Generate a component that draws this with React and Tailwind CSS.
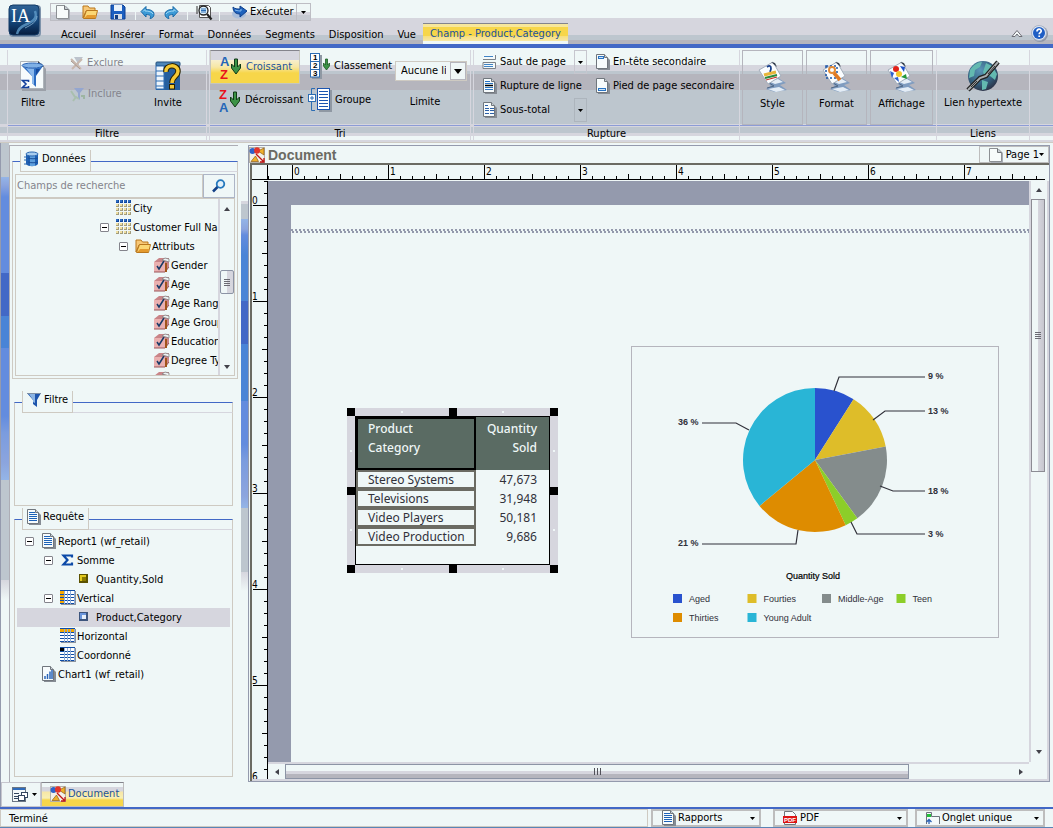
import React, { useState } from 'react';

/* ---------- icons ---------- */

const LogoIcon = () => (
  <svg width="34" height="34" viewBox="0 0 34 34" aria-hidden="true">
    <defs>
      <linearGradient id="logoBg" x1="0" y1="0" x2="0" y2="1">
        <stop offset="0" stopColor="#2f6295" />
        <stop offset="0.5" stopColor="#164a80" />
        <stop offset="1" stopColor="#061c3d" />
      </linearGradient>
    </defs>
    <rect x="1" y="1" width="32" height="32" rx="4" fill="#7e93ab" />
    <rect x="1" y="1" width="30" height="30" rx="4" fill="url(#logoBg)" stroke="#123a66" />
    <path d="M27 7c3 8-3 11-10 14-5 2-7 5-8 9" fill="none" stroke="#5f9bc9" strokeWidth="2.5" opacity="0.8" />
    <path d="M29 12c0 6-6 9-12 12" fill="none" stroke="#9cc7e6" strokeWidth="1" opacity="0.7" />
    <text x="3" y="18" fontFamily="Liberation Serif, serif" fontSize="18" fill="#fff">IA</text>
  </svg>
);

const NewIcon = () => (
  <svg width="16" height="16" viewBox="0 0 16 16" aria-hidden="true">
    <path d="M3 2h8l4 4v10H3z" fill="#a9adb5" />
    <path d="M1.500 1.500h8l4 4v9h-12z" fill="#f7fbfb" stroke="#8c9094" />
    <path d="M9.500 1.500v4h4" fill="#c6ccd2" stroke="#6f7377" />
  </svg>
);

const FolderIcon = () => (
  <svg width="16" height="16" viewBox="0 0 16 16" aria-hidden="true">
    <path d="M1 2h5l1.500 2H13v3H4L1 14z" fill="#f7c877" stroke="#b9771d" />
    <path d="M4.500 6.500h11l-2 8h-12z" fill="#fbd774" stroke="#b9771d" />
    <path d="M5 11h9l-1 3H2.500z" fill="#e49a2e" />
  </svg>
);

const SaveIcon = () => (
  <svg width="16" height="16" viewBox="0 0 16 16" aria-hidden="true">
    <path d="M1 1h12l2 2v12H1z" fill="#1c5fc0" stroke="#0d3f94" />
    <rect x="4" y="1" width="8" height="6" fill="#eaf3fb" />
    <rect x="4" y="10" width="8" height="5" fill="#d5dde6" />
    <rect x="5" y="11" width="3" height="4" fill="#123d83" />
  </svg>
);

const UndoIcon = ({ flip }) => (
  <svg width="15" height="15" viewBox="0 0 15 15" className={flip ? '-scale-x-100' : ''} aria-hidden="true">
    <path d="M1 6.500l5-5v3c4 0 8 1 8 5 0 2-2 4-4 4 1-2 1-4-4-4v2.500z" fill="#3b9ad6" stroke="#1a6aa8" />
    <path d="M3 6.500l2-2V6c4 0 7 1 8 3" fill="none" stroke="#9fd8f5" />
  </svg>
);

const PreviewIcon = () => (
  <svg width="18" height="17" viewBox="0 0 18 17" aria-hidden="true">
    <path d="M4.500 1.500h9l2 2v10h-11z" fill="#fff" stroke="#555" />
    <path d="M1 3h2M1 5h2M1 7h2M1 9h2" stroke="#333" />
    <circle cx="8.500" cy="6.500" r="4.500" fill="#dff1fb" stroke="#222" strokeWidth="1.300" />
    <path d="M6 5h5M6 6.500h5M6 8h5" stroke="#2b6fb8" />
    <path d="M12 10l4.500 5.500" stroke="#222" strokeWidth="2.200" />
  </svg>
);

const RunIcon = () => (
  <svg width="16" height="14" viewBox="0 0 16 14" aria-hidden="true">
    <ellipse cx="7" cy="9" rx="7" ry="4.500" fill="#a8bedc" />
    <path d="M1 2c2 2 4 2 7 2V1l7 5-7 6V9C4 9 1 7 1 2z" fill="#1d62bd" stroke="#0e3f8c" />
    <path d="M3 5c3 1 5 1 6 1V4" fill="none" stroke="#86bdf0" />
  </svg>
);

const HelpIcon = () => (
  <svg width="17" height="17" viewBox="0 0 17 17" aria-hidden="true">
    <circle cx="9" cy="9" r="8" fill="#8f96a5" />
    <circle cx="8" cy="8" r="7.500" fill="#dce6f4" stroke="#aab3c4" />
    <circle cx="8" cy="8" r="6" fill="#1f5ec4" />
    <path d="M6 6.500c0-3 4.200-3 4.200-.5 0 1.600-2 1.600-2 3.200M8.200 10.500v1.600" fill="none" stroke="#fff" strokeWidth="1.700" />
  </svg>
);

const ChevronsIcon = () => (
  <svg width="12" height="9" viewBox="0 0 12 9" aria-hidden="true">
    <path d="M1 7.500l5-6 5 6H8L6 5 4 7.500z" fill="#f6fafa" stroke="#6d6d75" />
  </svg>
);

const SigmaFilterIcon = () => (
  <svg width="28" height="32" viewBox="0 0 28 32" aria-hidden="true">
    <path d="M3 3h19l5 6v22H3z" fill="#9ba0a8" />
    <path d="M1.500 1.500h18l5 5v22h-23z" fill="#f6fbfc" stroke="#aeb4ba" />
    <path d="M19 1v6h6z" fill="#3f434a" />
    <path d="M3 6c3 3 18 3 21 0l-7 10v11l-4-4v-7z" fill="#2b6cc2" />
    <path d="M7 8l6 8v7l2 2V9z" fill="#8ab8ec" />
    <path d="M17 9h4l-4 6z" fill="#164a9c" />
    <ellipse cx="13.500" cy="5.500" rx="10.500" ry="2.500" fill="#7fb0e6" stroke="#2f66b5" />
    <path d="M9.500 22V20.500h-6l3.500 3.500-3.500 3.500h6V26" fill="none" stroke="#123f9c" strokeWidth="1.600" />
  </svg>
);

const ExcludeIcon = () => (
  <svg width="14" height="14" viewBox="0 0 14 14" aria-hidden="true">
    <path d="M4 1h9L9 6v6L7 10V6z" fill="#bcc3cc" />
    <path d="M1 3l10 10M12 3L2 13" stroke="#c8b8ae" strokeWidth="2" />
    <path d="M1 5l9 8" stroke="#a9988f" />
  </svg>
);

const IncludeIcon = () => (
  <svg width="15" height="15" viewBox="0 0 15 15" aria-hidden="true">
    <path d="M4 1h10l-4 5v7l-2-2V6z" fill="#94a6d0" />
    <path d="M1 4l4 6M3 14l3-4 3 2" fill="none" stroke="#a9bfae" strokeWidth="2" />
    <path d="M11 9h3v3" fill="none" stroke="#9db5a2" strokeWidth="2" />
  </svg>
);

const PromptIcon = () => (
  <svg width="26" height="30" viewBox="0 0 26 30" aria-hidden="true">
    <rect x="1" y="2" width="24" height="27" fill="#255f9e" />
    <rect x="1" y="1" width="24" height="4" rx="1" fill="#4e86b8" stroke="#234f7d" />
    <rect x="1" y="5" width="8" height="23" fill="#eef5fb" stroke="#2c6db3" />
    <path d="M1 10h9M1 15h9M1 20h9M1 25h9" stroke="#2c6db3" />
    <path d="M11 11c-1-8 12-8 12-1 0 6-6 5-6 12" fill="none" stroke="#2b2200" strokeWidth="5.500" />
    <path d="M11 11c-1-8 12-8 12-1 0 6-6 5-6 12" fill="none" stroke="#f4c934" strokeWidth="3.500" />
    <rect x="14.500" y="23.500" width="5" height="4.500" fill="#f4c934" stroke="#2b2200" />
  </svg>
);

const SortIcon = ({ down }) => (
  <svg width="24" height="26" viewBox="0 0 24 26" aria-hidden="true">
    <text x="1" y="12" fontFamily="Liberation Sans, sans-serif" fontWeight="bold" fontSize="13" fill={down ? '#e8121b' : '#2666b8'}>
      {down ? 'Z' : 'A'}
    </text>
    <text x="1" y="25" fontFamily="Liberation Sans, sans-serif" fontWeight="bold" fontSize="13" fill={down ? '#2666b8' : '#e8121b'}>
      {down ? 'A' : 'Z'}
    </text>
    <path d="M15.500 5h3v8l3-3v4l-4.500 6-4.500-6v-4l3 3z" fill="#3c9346" stroke="#123b17" />
  </svg>
);

const RankIcon = () => (
  <svg width="21" height="26" viewBox="0 0 21 26" aria-hidden="true">
    <rect x="2" y="2" width="10" height="24" fill="#8f98a3" />
    <rect x="0.500" y="0.500" width="9" height="23.500" fill="#fff" stroke="#2c6db3" />
    <path d="M0 8.500h10M0 16.500h10" stroke="#2c6db3" />
    <g fontFamily="Liberation Sans, sans-serif" fontWeight="bold" fontSize="8" fill="#000">
      <text x="3" y="7">1</text>
      <text x="3" y="15">2</text>
      <text x="3" y="23">3</text>
    </g>
    <path d="M15.500 6h2v6l2-2v3l-3 4-3-4v-3l2 2z" fill="#3c9346" stroke="#1d5a24" strokeWidth="0.800" />
  </svg>
);

const GroupIcon = () => (
  <svg width="24" height="26" viewBox="0 0 24 26" aria-hidden="true">
    <path d="M7 1.500H3.500V7M3.500 15v8.500H7" fill="none" stroke="#2c6db3" />
    <rect x="0.500" y="7.500" width="7" height="7" fill="#fff" stroke="#2c6db3" />
    <path d="M2 11h4M4 9v4" stroke="#2c6db3" />
    <rect x="11" y="3" width="13" height="22" fill="#8f98a3" />
    <rect x="9.500" y="1.500" width="12" height="21" fill="#fff" stroke="#1c55b0" />
    <path d="M11 4.500h9M11 7.500h9M11 10.500h9M11 13.500h9M11 16.500h9M11 19.500h9" stroke="#1c55b0" />
  </svg>
);

// small sheet used by the page break / subtotal commands
const SheetIcon = ({ kind }) => (
  <svg width="15" height="16" viewBox="0 0 15 16" aria-hidden="true">
    {kind === 'break' ? (
      <>
        <path d="M1 1h12v5H1zM1 9h12v6H1z" fill="#f4f9fa" />
        <path d="M1 5.500h12.500V1M1 14.500h12.500V8.500H1z" fill="none" stroke="#7b8187" />
        <path d="M2 2.500h9M2 10.500h9M2 12.500h9" stroke="#3f83c4" />
      </>
    ) : (
      <>
        <path d="M3 2h8l4 4v10H3z" fill="#868c94" />
        <path d="M1.500 0.500h8l3 3v11h-11z" fill="#f7fbfc" stroke="#70767d" />
        <path d="M9.500 0.500v3h3" fill="#ccd3d9" stroke="#70767d" />
      </>
    )}
    {kind === 'line' && (
      <>
        <path d="M3 3.500h5M3 5.500h8M3 11.500h8M3 9.500h8" stroke="#2a74c4" />
        <path d="M3 7.500h8" stroke="#000" strokeWidth="1.500" />
      </>
    )}
    {kind === 'sub' && <path d="M3 3.500h3M3 6.500h4M3 8.500h4M3 11.500h4M8 6.500h4M8 8.500h4M8 11.500h4" stroke="#2b5fa8" />}
    {kind === 'head' && <rect x="3.500" y="2.500" width="5" height="2" fill="#cfe4f5" stroke="#2a74c4" />}
    {kind === 'foot' && <rect x="3.500" y="10.500" width="7" height="2" fill="#cfe4f5" stroke="#2a74c4" />}
    {kind === 'text' && <path d="M3 3.500h6M3 5.500h8M3 7.500h8M3 9.500h8M3 11.500h8" stroke="#1d62b8" />}
    {kind === 'bars' && <path d="M4 13v-3M6.500 13V8M9 13V5.500M11 13V4" stroke="#2a64b8" strokeWidth="1.500" />}
  </svg>
);

const ToolIcon = ({ kind }) => (
  <svg width="30" height="32" viewBox="0 0 30 32" aria-hidden="true">
    <path d="M8 20l12-3 8 5-6 2 7 5-12 2-9-3 5-3z" fill="#7f9cc0" />
    <path d="M10 20l10-2 5 3-8 2zM10 28l11-2 6 3-9 2z" fill="#e4edf6" />
    <path d="M8 20l8 5M9 27l7-2" stroke="#4f6683" />
    <path d="M1 9l14-8 8 14-13 8z" fill="#fafdff" stroke="#a3adba" />
    <path d="M13 1l4 1 2 4z" fill="#323c4a" />
    {kind === 'style' && (
      <>
        <path d="M9 6c4-3 5 1 3 5" fill="none" stroke="#173f8a" strokeWidth="1.800" />
        <path d="M6 14l12-3" stroke="#e8b53a" strokeWidth="3" />
        <path d="M7 17l12-3" stroke="#2c8a3c" strokeWidth="2" />
        <path d="M8 19l11-3" stroke="#c33127" strokeWidth="1.200" />
      </>
    )}
    {kind === 'format' && (
      <>
        <path d="M4 5h11v12H4z" fill="none" stroke="#1c55a8" strokeDasharray="2 2" strokeWidth="1.500" />
        <circle cx="10" cy="9" r="3" fill="none" stroke="#e48b35" strokeWidth="2" />
        <path d="M12 12l6 7" stroke="#e07a24" strokeWidth="3.500" />
      </>
    )}
    {kind === 'show' && (
      <>
        <circle cx="9" cy="8" r="3" fill="#e2231a" />
        <path d="M3 10l4 2-2 5z" fill="#2a5fd0" />
        <circle cx="12" cy="13" r="3" fill="#f3c62b" />
        <path d="M7 17l4-1 1 5z" fill="#2a5fd0" />
        <path d="M14 16l5-3 1 5z" fill="#24983a" />
        <path d="M13 5l5 1-1 5z" fill="#1d50c8" />
      </>
    )}
  </svg>
);

const GlobeIcon = () => (
  <svg width="34" height="33" viewBox="0 0 34 33" aria-hidden="true">
    <defs>
      <radialGradient id="globe" cx="0.400" cy="0.300" r="0.750">
        <stop offset="0" stopColor="#5b96b8" />
        <stop offset="0.600" stopColor="#34607f" />
        <stop offset="1" stopColor="#2b2d40" />
      </radialGradient>
    </defs>
    <circle cx="17" cy="16" r="15" fill="url(#globe)" />
    <path d="M4 10c3-5 8-8 12-8l-2 5-5 3-1 6-5 2zM20 3l6 3 5 8-2 6-5-4-5 1-2-5zM16 20l6 2-2 7-4 1z" fill="#63b9b0" />
    <path d="M2 30L14 18l6-2L32 2" fill="none" stroke="#222" strokeWidth="4.500" />
    <path d="M2 30L14 18l6-2L32 2" fill="none" stroke="#a9adb0" strokeWidth="2" />
    <path d="M5 27l6-6M22 14l7-8" stroke="#333" strokeWidth="1" />
  </svg>
);

const DatabaseIcon = () => (
  <svg width="16" height="16" viewBox="0 0 16 16" aria-hidden="true">
    <path d="M2 3v10c2 3 10 3 12 0V3z" fill="#1d5fb3" />
    <path d="M6 3h5v12H6z" fill="#5d9fdd" />
    <ellipse cx="8" cy="3" rx="6" ry="2" fill="#a8cdee" stroke="#2a66b0" />
    <path d="M0 6h4M0 9h4M0 13h4" fill="none" stroke="#2a66b0" />
    <path d="M4 7c2 1 8 1 10 0M4 11c2 1 8 1 10 0" fill="none" stroke="#1a4f99" />
  </svg>
);

const SearchIcon = () => (
  <svg width="14" height="14" viewBox="0 0 14 14" aria-hidden="true">
    <circle cx="8.500" cy="5" r="3.800" fill="#e2f0fa" stroke="#2478bd" strokeWidth="1.800" />
    <path d="M5.500 8L1 12.500" stroke="#123f86" strokeWidth="2.500" />
  </svg>
);

const FunnelIcon = () => (
  <svg width="16" height="16" viewBox="0 0 16 16" aria-hidden="true">
    <path d="M1 1h14l-4 7v7l-4-3V8z" fill="#1d54ac" />
    <path d="M3 2h6v9l-2-1V8z" fill="#8bb4e4" />
    <path d="M1 1.500h14" stroke="#7d8fa6" />
  </svg>
);

const FieldDots = () => (
  <svg width="16" height="16" viewBox="0 0 16 16" aria-hidden="true">
    {[0, 1, 2, 3].map((r) =>
      [0, 1, 2, 3].map((c) => (
        <g key={`${r}-${c}`}>
          <rect x={c * 4} y={r * 4} width="3" height="3" fill={r === 0 ? '#12489e' : '#a29c7c'} />
          <rect x={c * 4} y={r * 4} width="2" height="2" fill={r === 0 ? '#2d6bc0' : '#f0dfa0'} />
        </g>
      ))
    )}
  </svg>
);

const AttrIcon = () => (
  <svg width="16" height="16" viewBox="0 0 16 16" aria-hidden="true">
    <path d="M0 5l5-4h10v9l-4 5H0z" fill="#c98488" />
    <path d="M0 5h11v10H0z" fill="#eab0b0" />
    <path d="M0 15h11l4-5" fill="none" stroke="#9a5558" />
    <path d="M3 9l2 3 5-8" fill="none" stroke="#173a68" strokeWidth="1.500" />
    <path d="M12 6v9" stroke="#a0541a" strokeWidth="2" />
    <path d="M8 3l3-2 4 1v3l-3-1z" fill="#eef2f4" stroke="#777" strokeWidth="0.700" />
  </svg>
);

const SigmaIcon = () => (
  <svg width="14" height="14" viewBox="0 0 14 14" aria-hidden="true">
    <path d="M12 4.500V2.500H3.500l4 4.500-4 4.500H12v-2" fill="none" stroke="#0d4aa8" strokeWidth="2.200" />
  </svg>
);

const GridIcon = ({ kind }) => (
  <svg width="16" height="16" viewBox="0 0 16 16" aria-hidden="true">
    <rect x="1" y="1" width="15" height="14" fill="#8d949e" />
    <rect width="15" height="14" fill="#fff" />
    {kind === 'v' && <rect width="4" height="14" fill="#f6a800" />}
    {kind === 'h' && <rect width="15" height="4" fill="#f6a800" />}
    {kind === 'c' && <rect width="4" height="4" fill="#000" />}
    <path d="M0 4.500h15M0 7.500h15M0 10.500h15M0 13.500h15" stroke="#0f4da6" />
    <path d="M4.500 0v14M7.500 0v14M10.500 0v14M14.500 0v14" stroke="#8fadd8" />
    <path d="M0 0.500h15" stroke="#0f4da6" />
  </svg>
);

const CubeIcon = ({ color }) => (
  <svg width="10" height="10" viewBox="0 0 10 10" aria-hidden="true">
    <rect width="9" height="9" fill={color === 'gold' ? '#5c5200' : '#3d557d'} />
    <rect x="1" y="1" width="6" height="6" fill={color === 'gold' ? '#e2c91e' : '#6b96dc'} />
    <rect x="3" y="3" width="4" height="4" fill={color === 'gold' ? '#8a7a00' : '#e6effa'} />
  </svg>
);

const DocIcon = () => (
  <svg width="16" height="16" viewBox="0 0 16 16" aria-hidden="true">
    <rect x="0.500" y="0.500" width="15" height="15" fill="#f3f1e8" stroke="#b5b0a8" />
    <path d="M9 4l6-3v7z" fill="#efb02b" stroke="#8d5a12" strokeWidth="0.700" />
    <path d="M2 14.500L6.500 9l3 5.500z" fill="#efb02b" stroke="#8d5a12" strokeWidth="0.700" />
    <ellipse cx="3.500" cy="4" rx="3" ry="3" fill="#2f62c9" />
    <ellipse cx="8" cy="3.500" rx="3" ry="3.200" fill="#e3352b" />
    <path d="M7 7l8 8M15 11v4h-4" fill="none" stroke="#c01515" strokeWidth="1.300" />
  </svg>
);

const WindowsIcon = () => (
  <svg width="17" height="16" viewBox="0 0 17 16" aria-hidden="true">
    <rect x="0.500" y="0.500" width="13" height="14" fill="#f4f9fa" stroke="#6b7684" />
    <path d="M1 2h12" stroke="#2f6bbb" strokeWidth="2" />
    <path d="M2 6.500h5M2 9.500h4M2 11.500h4" stroke="#33465f" />
    <rect x="9.500" y="5.500" width="6" height="5" fill="#fff" stroke="#33465f" />
    <rect x="6.500" y="8.500" width="6" height="5" fill="#fff" stroke="#33465f" />
  </svg>
);

const PdfIcon = () => (
  <svg width="15" height="14" viewBox="0 0 15 14" aria-hidden="true">
    <path d="M1.500 0.500h8l3 3v10h-11z" fill="#f7fbfc" stroke="#70767d" />
    <rect x="0" y="5" width="14" height="7" fill="#dc1414" />
    <text x="1" y="11" fontFamily="Liberation Sans, sans-serif" fontWeight="bold" fontSize="6" fill="#fff">PDF</text>
  </svg>
);

const TabOutIcon = () => (
  <svg width="15" height="13" viewBox="0 0 15 13" aria-hidden="true">
    <path d="M1.500 12V0.500h5v4h8V12" fill="#f4f9fa" stroke="#6c747c" />
    <rect x="2" y="2" width="4" height="3" fill="#22c03a" />
    <path d="M4 12V8M1.500 10L4 7.500 6.500 10" fill="none" stroke="#2a62b4" strokeWidth="1.300" />
  </svg>
);

const Caret = ({ className = '' }) => (
  <svg width="5" height="3" viewBox="0 0 5 3" className={className} aria-hidden="true">
    <path d="M0 0h5L2.500 3z" fill="#000" />
  </svg>
);

/* ---------- ribbon ---------- */

const TABS = ['Accueil', 'Insérer', 'Format', 'Données', 'Segments', 'Disposition', 'Vue'];

const RibbonGroup = ({ title, className, children }) => (
  <section className={`flex shrink-0 flex-col border-r border-[#d6d6de] ${className}`}>
    <div className="flex h-19 border-b border-[#8c9cd6]">{children}</div>
    <h2 className="h-4 text-center leading-4">{title}</h2>
  </section>
);

const BigButton = ({ icon, label, className = '' }) => (
  <button className={`flex flex-col items-center gap-[3px] pt-2 whitespace-nowrap ${className}`}>
    <span className="flex h-9 items-center">{icon}</span>
    <span className="leading-3">{label}</span>
  </button>
);

const SmallButton = ({ icon, label, className = '' }) => (
  <button className={`flex items-center gap-[3px] whitespace-nowrap ${className}`}>
    {icon}
    <span>{label}</span>
  </button>
);

const Header = () => (
  <header className="flex h-12 border-b-4 border-[#4268c6] bg-[linear-gradient(#eff7f7_18px,#d6d6de_18px,#d6d6de_35px,#bdc6ce_35px,#bdc6ce_40px,#b5b5bd_40px)] pl-2">
    <button className="mt-1 h-[34px] shrink-0" aria-label="Menu">
      <LogoIcon />
    </button>
    <div className="ml-2 flex flex-1 flex-col pt-[3px]">
      <div className="flex h-[18px] items-center self-start border border-[#bdbdc4] bg-[linear-gradient(#eff7f7_8px,#d6d6de_8px,#d6d6de_11px,#c6cad2_11px)] pl-1">
        <button className="w-[27px]" aria-label="Nouveau"><NewIcon /></button>
        <button className="w-7" aria-label="Ouvrir"><FolderIcon /></button>
        <button className="w-[26px] border-r border-[#eff7f7]" aria-label="Enregistrer"><SaveIcon /></button>
        <button className="ml-1 w-6" aria-label="Annuler"><UndoIcon /></button>
        <button className="w-6 border-r border-[#eff7f7]" aria-label="Rétablir"><UndoIcon flip /></button>
        <button className="flex w-8 justify-center border-r border-[#eff7f7]" aria-label="Aperçu"><PreviewIcon /></button>
        <button className="ml-3 flex items-center gap-[2px] pr-[2px] leading-4">
          <RunIcon />
          Exécuter
        </button>
        <button className="flex h-full w-[14px] items-center justify-center border-l border-[#bdbdc4]" aria-label="Options"><Caret /></button>
      </div>
      <nav className="mt-[2px] flex h-[21px] items-center pl-1">
        {TABS.map((tab) => (
          <a key={tab} href="#" className="px-[7px] pt-[2px] leading-4">{tab}</a>
        ))}
        <a
          href="#"
          className="flex h-[21px] items-center border-t border-[#84848c] bg-[linear-gradient(#f7e79c_3px,#f7d64a_3px,#f7d64a_12px,#f7df7b_12px,#f7e7a5_17px,#eff7f7_17px)] px-[7px] text-[#21529c]"
        >
          Champ - Product,Category
        </a>
        <button className="mr-2 ml-auto" aria-label="Réduire"><ChevronsIcon /></button>
        <button className="mr-[5px]" aria-label="Aide"><HelpIcon /></button>
      </nav>
    </div>
  </header>
);

const Ribbon = () => (
  <div className="flex h-[95px] border-b border-[#cecac2] bg-[linear-gradient(#eff7f7_17px,#d6d6de_17px,#d6d6de_23px,#bdc6ce_23px,#bdc6ce_26px,#b5b5bd_26px,#b5b5bd_42px,#bdc6ce_42px,#bdc6ce_76px,#d6d6de_76px,#d6d6de_79px,#bdc6ce_79px,#bdc6ce_85px,#d6d6de_85px,#d6d6de_88px,#eff7f7_88px,#eff7f7_92px,#d6d6de_92px)] pt-[2px] pl-[7px]">
    <RibbonGroup title="Filtre" className="w-[200px] border-l">
      <BigButton icon={<SigmaFilterIcon />} label="Filtre" className="w-[50px]" />
      <div className="ml-3 flex w-[66px] flex-col gap-[15px] pt-[5px] text-[#84848c]">
        <SmallButton icon={<ExcludeIcon />} label="Exclure" />
        <SmallButton icon={<IncludeIcon />} label="Inclure" />
      </div>
      <BigButton icon={<PromptIcon />} label="Invite" className="ml-1 w-14" />
    </RibbonGroup>

    <RibbonGroup title="Tri" className="ml-[2px] w-[262px] border-l">
      <div className="flex w-[90px] flex-col">
        <SmallButton
          icon={<SortIcon />}
          label="Croissant"
          className="h-[34px] border border-[#c6c6bd] border-t-[#84848c] bg-[linear-gradient(#d6d6de_9px,#f7efce_9px,#f7e7a5_16px,#f7d64a_22px)] pl-2 text-[#21529c]"
        />
        <SmallButton icon={<SortIcon down />} label="Décroissant" className="h-8 pl-2" />
      </div>
      <div className="ml-2 flex w-[87px] flex-col">
        <SmallButton icon={<RankIcon />} label="Classement" className="h-8 pl-[2px]" />
        <SmallButton icon={<GroupIcon />} label="Groupe" className="h-9" />
      </div>
      <div className="flex w-[72px] flex-col items-center pt-[11px]">
        <div className="relative w-full">
          <select
            id="limite"
            className="h-5 w-full appearance-none border border-[#cecac2] bg-[#eff7f7] pr-5 pl-[5px]"
          >
            <option>Aucune limite</option>
          </select>
          <span className="pointer-events-none absolute inset-y-px right-px flex w-4 items-center justify-center border border-[#b5b5bd] bg-[#eff7f7]">
            <svg width="8" height="5" viewBox="0 0 8 5" aria-hidden="true">
              <path d="M0 0h8L4 5z" fill="#000" />
            </svg>
          </span>
        </div>
        <label htmlFor="limite" className="mt-[13px] mr-3">Limite</label>
      </div>
    </RibbonGroup>

    <RibbonGroup title="Rupture" className="ml-[2px] w-[267px] border-l">
      <div className="flex w-[100px] flex-col pl-2">
        <SmallButton icon={<SheetIcon kind="break" />} label="Saut de page" className="h-6" />
        <SmallButton icon={<SheetIcon kind="line" />} label="Rupture de ligne" className="h-6" />
        <SmallButton icon={<SheetIcon kind="sub" />} label="Sous-total" className="h-6" />
      </div>
      <div className="flex w-[13px] flex-col gap-6">
        <button className="flex h-6 items-center justify-center border border-[#c6c6ce]" aria-label="Options de saut de page"><Caret /></button>
        <button className="flex h-6 items-center justify-center border border-[#adb5bd]" aria-label="Options de sous-total"><Caret /></button>
      </div>
      <div className="ml-2 flex flex-col">
        <SmallButton icon={<SheetIcon kind="head" />} label="En-tête secondaire" className="h-6" />
        <SmallButton icon={<SheetIcon kind="foot" />} label="Pied de page secondaire" className="h-6" />
      </div>
    </RibbonGroup>

    <RibbonGroup title="" className="w-[197px]">
      <BigButton icon={<ToolIcon kind="style" />} label="Style" className="ml-[2px] w-[61px] border border-[#b5b5bd]" />
      <BigButton icon={<ToolIcon kind="format" />} label="Format" className="ml-[3px] w-[61px] border border-[#b5b5bd]" />
      <BigButton icon={<ToolIcon kind="show" />} label="Affichage" className="ml-[3px] w-[63px] border border-[#b5b5bd]" />
    </RibbonGroup>

    <RibbonGroup title="Liens" className="w-[93px]">
      <BigButton icon={<GlobeIcon />} label="Lien hypertexte" className="w-full" />
    </RibbonGroup>
    <div className="h-19 flex-1 border-b border-[#8c9cd6]" />
  </div>
);

/* ---------- left side ---------- */

const Panel = ({ icon, title, className = '', children }) => (
  <section className={`flex flex-col ${className}`}>
    <div className="flex h-[22px] shrink-0">
      <span className="mt-[11px] w-2 border-t border-l border-t-[#4268c6] border-l-[#cecac2]" />
      <h2 className="flex items-center gap-[2px] border-x border-b border-[#cecac2] pr-1 pb-[3px] pl-[3px] leading-4">
        {icon}
        {title}
      </h2>
      <span className="mt-[11px] flex-1 border-t border-r border-b border-t-[#4268c6] border-r-[#cecac2] border-b-[#d6d6de]" />
    </div>
    <div className="flex min-h-0 flex-1 flex-col border border-t-0 border-[#cecac2]">{children}</div>
  </section>
);

const Toggle = () => (
  <button className="flex size-[9px] shrink-0 items-center justify-center rounded-[1px] border border-[#84848c] bg-white" aria-label="Réduire le nœud">
    <span className="h-px w-[5px] bg-black" />
  </button>
);

const TreeRow = ({ indent, toggle, icon, label, selected }) => (
  <li className={`flex h-[19px] items-center whitespace-nowrap ${selected ? 'bg-[#d6d6de]' : ''} ${indent}`}>
    <span className="flex w-4 shrink-0 items-center">{toggle && <Toggle />}</span>
    <span className="flex h-[19px] w-[17px] shrink-0 items-center pb-px">{icon}</span>
    {label}
  </li>
);

const ATTRIBUTES = ['Gender', 'Age', 'Age Range', 'Age Group', 'Education', 'Degree Type', 'Person Gender'];

const DataPanel = () => {
  const [query, setQuery] = useState('');

  return (
    <Panel icon={<DatabaseIcon />} title="Données" className="h-[229px]">
      <div className="mx-[2px] mt-[2px] flex h-6 shrink-0">
        <input
          type="text"
          aria-label="Champs de recherche"
          placeholder="Champs de recherche"
          value={query}
          onChange={(e) => setQuery(e.target.value)}
          className="min-w-0 flex-1 border border-[#cecac2] bg-transparent pl-px placeholder:text-[#84848c]"
        />
        <button className="flex w-8 items-center justify-center border border-[#adb5c6]" aria-label="Rechercher">
          <SearchIcon />
        </button>
      </div>
      <div className="mx-[2px] mb-[2px] flex min-h-0 flex-1 border border-[#cecac2]">
        <ul className="min-w-0 flex-1 overflow-hidden">
          <TreeRow indent="pl-[84px]" icon={<FieldDots />} label="City" />
          <TreeRow indent="pl-[84px]" toggle icon={<FieldDots />} label="Customer Full Name" />
          <TreeRow indent="pl-[103px]" toggle icon={<FolderIcon />} label="Attributs" />
          {ATTRIBUTES.map((name) => (
            <TreeRow key={name} indent="pl-[122px]" icon={<AttrIcon />} label={name} />
          ))}
        </ul>
        <div className="flex w-4 flex-col items-center border-l-2 border-[#d6d6de]">
          <ArrowButton dir="up" className="h-5 w-4" />
          <div className="mt-[51px] flex h-6 w-[14px] flex-col items-center justify-center gap-px rounded-[2px] border border-[#8c94a5] bg-[linear-gradient(90deg,#eff7f7_50%,#d6d6de_50%)]">
            <span className="h-px w-[6px] bg-[#6b6b73]" />
            <span className="h-px w-[6px] bg-[#6b6b73]" />
            <span className="h-px w-[6px] bg-[#6b6b73]" />
            <span className="h-px w-[6px] bg-[#6b6b73]" />
          </div>
          <ArrowButton dir="down" className="mt-auto h-4 w-4" />
        </div>
      </div>
    </Panel>
  );
};

const QueryPanel = () => (
  <Panel icon={<SheetIcon kind="text" />} title="Requête" className="mt-[2px] mr-[5px] ml-[2px] flex-1">
    <ul className="mx-[2px] mt-[2px]">
      <TreeRow indent="pl-2" toggle icon={<SheetIcon kind="text" />} label="Report1 (wf_retail)" />
      <TreeRow indent="pl-[27px]" toggle icon={<SigmaIcon />} label="Somme" />
      <TreeRow indent="pl-[46px]" icon={<CubeIcon color="gold" />} label="Quantity,Sold" />
      <TreeRow indent="pl-[27px]" toggle icon={<GridIcon kind="v" />} label="Vertical" />
      <TreeRow indent="pl-[46px]" selected icon={<CubeIcon />} label="Product,Category" />
      <TreeRow indent="pl-[27px]" icon={<GridIcon kind="h" />} label="Horizontal" />
      <TreeRow indent="pl-[27px]" icon={<GridIcon kind="c" />} label="Coordonné" />
      <TreeRow indent="pl-2" icon={<SheetIcon kind="bars" />} label="Chart1 (wf_retail)" />
    </ul>
  </Panel>
);

/* ---------- document ---------- */

const ARROWS = {
  up: 'M1 6l3-4 3 4z',
  down: 'M1 2h6L4 6z',
  left: 'M6 1v6L2 4z',
  right: 'M2 1v6l4-3z',
};

function ArrowButton({ dir, className }) {
  return (
    <button className={`flex shrink-0 items-center justify-center ${className}`} aria-label={`Défiler ${dir}`}>
      <svg width="8" height="8" viewBox="0 0 8 8" aria-hidden="true">
        <path d={ARROWS[dir]} fill="#42424a" />
      </svg>
    </button>
  );
}

const tickSize = (i) => (i % 8 === 0 ? 14 : i % 4 === 0 ? 5 : 3);
const range = (from, to) => Array.from({ length: to - from }, (_, i) => from + i);

const TopRuler = () => (
  <svg className="block h-4 w-full" aria-hidden="true">
    <rect y="14" width="100%" height="1" fill="#000" />
    <rect x="15" y="0" width="1" height="15" fill="#000" />
    {range(-2, 160).map((i) => (
      <rect key={i} x={40 + i * 12} y={14 - tickSize(i)} width="1" height={tickSize(i)} fill="#000" />
    ))}
    {range(0, 8).map((i) => (
      <text key={i} x={42 + i * 96} y="10" fontFamily="DejaVu Sans Condensed, DejaVu Sans, sans-serif" fontSize="10">{i}</text>
    ))}
  </svg>
);

const SideRuler = () => (
  <svg className="block h-full w-4 shrink-0" aria-hidden="true">
    <rect x="15" width="1" height="100%" fill="#000" />
    {range(-2, 160).map((i) => (
      <rect key={i} x={15 - tickSize(i)} y={24 + i * 12} width={tickSize(i)} height="1" fill="#000" />
    ))}
    {range(0, 7).map((i) => (
      <text key={i} x="0" y={23 + i * 96} fontFamily="DejaVu Sans Condensed, DejaVu Sans, sans-serif" fontSize="10">{i}</text>
    ))}
  </svg>
);

const ROWS = [
  ['Stereo Systems', '47,673'],
  ['Televisions', '31,948'],
  ['Video Players', '50,181'],
  ['Video Production', '9,686'],
];

const HANDLES = [
  'left-0 top-0', 'left-[102px] top-0', 'right-0 top-0',
  'left-0 top-[79px]', 'right-0 top-[79px]',
  'left-0 bottom-0', 'left-[102px] bottom-0', 'right-0 bottom-0',
];

const DOTS = [
  'left-[54px] top-[3px]', 'left-[155px] top-[3px]',
  'left-[54px] bottom-[3px]', 'left-[155px] bottom-[3px]',
  'left-[3px] top-[42px]', 'right-[3px] top-[42px]',
  'left-[3px] top-[121px]', 'right-[3px] top-[121px]',
];

const ReportTable = () => (
  <div className="absolute top-[203px] left-14 h-[165px] w-[211px] bg-[#d6d6de] p-2">
    {HANDLES.map((pos) => (
      <span key={pos} className={`absolute size-2 bg-black ${pos}`} />
    ))}
    {DOTS.map((pos) => (
      <span key={pos} className={`absolute size-[2px] bg-[#eff7f7] ${pos}`} />
    ))}
    <div className="h-full border border-black bg-[#eff7f7]">
      <table className="w-full table-fixed border-separate border-spacing-0 font-['Noto_Sans','Open_Sans',sans-serif] text-xs leading-[19px] text-[#31313a]">
        <thead>
          <tr className="h-[53px] bg-[#5a6b63] align-top text-[#eff7f7]">
            <th className="w-[120px] border-2 border-black pl-[10px] text-left font-medium">
              Product<br />Category
            </th>
            <th className="border-t-2 border-[#5a6b63] pr-3 text-right font-medium">
              Quantity<br />Sold
            </th>
          </tr>
        </thead>
        <tbody>
          {ROWS.map(([name, qty]) => (
            <tr key={name}>
              <td className="border-2 border-[#6b6b63] p-0 pl-[10px] leading-[15px] whitespace-nowrap">{name}</td>
              <td className="p-0 pr-3 text-right leading-[15px]">{qty}</td>
            </tr>
          ))}
        </tbody>
      </table>
    </div>
  </div>
);

const SLICES = [
  { name: 'Aged', value: 9, color: '#2952ce' },
  { name: 'Fourties', value: 13, color: '#debd29' },
  { name: 'Middle-Age', value: 18, color: '#848c8c' },
  { name: 'Teen', value: 3, color: '#8cce29' },
  { name: 'Thirties', value: 21, color: '#de8c00' },
  { name: 'Young Adult', value: 36, color: '#29b5d6' },
];

const CALLOUTS = [
  { text: '9 %', x: 297, y: 33, line: '203,45 208,31 294,31' },
  { text: '13 %', x: 297, y: 68, line: '242,74 254,65 294,65' },
  { text: '18 %', x: 297, y: 148, line: '249,140 262,145 294,145' },
  { text: '3 %', x: 297, y: 191, line: '220,176 226,188 294,188' },
  { text: '21 %', x: 47, y: 200, line: '167,184 165,198 71,198' },
  { text: '36 %', x: 47, y: 79, line: '118,84 105,77 71,77' },
];

const slicePath = (start, end) => {
  const point = (p) => {
    const a = (p / 100) * Math.PI * 2;
    return `${184 + 72 * Math.sin(a)} ${114 - 72 * Math.cos(a)}`;
  };
  return `M184 114L${point(start)}A72 72 0 0 1 ${point(end)}z`;
};

const PieChart = () => {
  let total = 0;
  const slices = SLICES.map((s) => {
    const start = total;
    total += s.value;
    return { ...s, d: slicePath(start, total) };
  });

  return (
    <div className="absolute top-[141px] left-[340px] border border-[#b5b5bd]">
      <svg width="366" height="290" viewBox="1 1 366 290" fontFamily="Liberation Sans, sans-serif" fontSize="9" fill="#31313a">
        {slices.map((s) => (
          <path key={s.name} d={s.d} fill={s.color} />
        ))}
        {CALLOUTS.map((c) => (
          <g key={c.text}>
            <polyline points={c.line} fill="none" stroke="#31313a" strokeWidth="1.200" />
            <text x={c.x} y={c.y} fontWeight="bold">{c.text}</text>
          </g>
        ))}
        <text x="182" y="233" textAnchor="middle" stroke="#000" strokeWidth="0.200" fill="#000">Quantity Sold</text>
        {SLICES.map((s, i) => {
          const x = 42 + (i % 4) * 74.500;
          const y = 248 + Math.floor(i / 4) * 19;
          return (
            <g key={s.name}>
              <rect x={x} y={y} width="9" height="9" fill={s.color} />
              <text x={x + 16} y={y + 8}>{s.name}</text>
            </g>
          );
        })}
      </svg>
    </div>
  );
};

const Canvas = () => (
  <div className="flex min-w-0 flex-1 overflow-hidden bg-[#949aad] pt-6 pl-[23px]">
    <div className="relative flex-1 bg-[#eff7f7]">
      <svg className="mt-6 block h-1 w-full" aria-hidden="true">
        <defs>
          <pattern id="dots" width="4" height="4" patternUnits="userSpaceOnUse">
            <rect width="2" height="2" fill="#949aad" />
            <rect x="1" y="2" width="2" height="2" fill="#949aad" />
          </pattern>
        </defs>
        <rect width="100%" height="4" fill="url(#dots)" />
      </svg>
      <ReportTable />
      <PieChart />
    </div>
  </div>
);

const DocumentWindow = () => (
  <main className="mt-[2px] mr-[3px] flex min-w-0 flex-1 flex-col border border-[#949aad]">
    <div className="flex h-[17px] shrink-0 items-center">
      <DocIcon />
      <h1 className="ml-[3px] font-['Liberation_Sans',sans-serif] text-sm leading-4 font-bold text-[#6b6b63]">Document</h1>
      <button className="ml-auto flex h-[17px] items-center gap-[2px] border border-[#bdbdbd] pr-1 pl-2">
        <NewIcon />
        <span>Page 1</span>
        <Caret className="-ml-[2px]" />
      </button>
    </div>
    <div className="ml-px flex min-h-0 flex-1 flex-col border-t-2 border-l-2 border-[#6b6b63]">
      <div className="pr-1">
        <TopRuler />
      </div>
      <div className="flex min-h-0 flex-1 border-r-2 border-b-2 border-[#d6d6de]">
        <SideRuler />
        <div className="flex min-w-0 flex-1 flex-col">
          <div className="flex min-h-0 flex-1">
            <Canvas />
            <div className="flex w-[18px] flex-col border-l-2 border-[#d6d6de]">
              <ArrowButton dir="up" className="h-[18px]" />
              <div className="flex h-[47%] w-[14px] flex-col items-center justify-center gap-px border border-[#8c8c94] bg-[linear-gradient(90deg,#eff7f7_50%,#d6d6de_50%,#c6c6ce)]">
                <span className="h-px w-[6px] bg-[#6b6b73]" />
                <span className="h-px w-[6px] bg-[#6b6b73]" />
                <span className="h-px w-[6px] bg-[#6b6b73]" />
                <span className="h-px w-[6px] bg-[#6b6b73]" />
              </div>
              <ArrowButton dir="down" className="mt-auto h-5" />
            </div>
          </div>
          <div className="mr-[18px] flex h-[17px] shrink-0 border-t-2 border-[#d6d6de]">
            <ArrowButton dir="left" className="w-[17px]" />
            <div className="flex w-[82%] items-center justify-center gap-[2px] border border-[#8c94a5] bg-[linear-gradient(#eff7f7_6px,#d6d6de_6px,#d6d6de_9px,#b5b5bd_9px)]">
              <span className="h-[7px] w-px bg-[#52525a]" />
              <span className="h-[7px] w-px bg-[#52525a]" />
              <span className="h-[7px] w-px bg-[#52525a]" />
            </div>
            <ArrowButton dir="right" className="ml-auto w-[17px]" />
          </div>
        </div>
      </div>
    </div>
  </main>
);

/* ---------- status bar ---------- */

const StatusSelect = ({ name, value, icon, className }) => (
  <div className={`relative flex items-center border-2 border-[#bdbdbd] ${className}`}>
    <span className="pointer-events-none absolute left-2">{icon}</span>
    <select aria-label={name} className="w-full appearance-none bg-transparent pl-[25px] leading-4">
      <option>{value}</option>
    </select>
    <Caret className="pointer-events-none absolute right-1" />
  </div>
);

const Footer = () => (
  <footer>
    <div className="flex h-[25px] border-l border-[#949aad]">
      <button className="flex w-10 items-center gap-[3px] border border-[#c6c6ce] pl-[10px]" aria-label="Fenêtres">
        <WindowsIcon />
        <Caret />
      </button>
      <button className="flex w-[83px] items-center gap-[2px] border border-[#bdbdbd] border-t-[#84848c] bg-[linear-gradient(#eff7f7_4px,#d6d6de_4px,#d6d6de_8px,#f7e7a5_9px,#f7efb5_15px,#f7d64a_17px)] pb-[2px] pl-2 text-[#21529c]">
        <DocIcon />
        Document
      </button>
    </div>
    <div className="flex h-[21px] border-t-2 border-b border-t-[#4268c6] border-b-[#5a84b5] bg-[#eff7f7] pr-2">
      <p className="flex-1 border border-[#cecac2] pl-2 leading-[17px]">Terminé</p>
      <StatusSelect name="Sortie" value="Rapports" icon={<SheetIcon kind="text" />} className="ml-[3px] w-[110px]" />
      <StatusSelect name="Format de sortie" value="PDF" icon={<PdfIcon />} className="ml-3 w-[135px]" />
      <StatusSelect name="Cible" value="Onglet unique" icon={<TabOutIcon />} className="ml-[7px] w-[130px]" />
    </div>
  </footer>
);

export default function App() {
  return (
    <div className="flex min-h-screen flex-col bg-[#eff7f7] font-['DejaVu_Sans_Condensed','Open_Sans',sans-serif] text-[11px] leading-4 text-black [&_svg]:shrink-0">
      <Header />
      <Ribbon />
      <div className="flex flex-1">
        <div className="w-[9px] shrink-0 border-l border-[#949aad] bg-[linear-gradient(#bdc6ce_34px,#94b5e7_34px,#8ca5de_42px,#638cde_54px,#638cde_130px,#4268c6_130px,#4268c6_173px,#4a84d6_173px,#4a84d6_205px,#638cde_205px,#638cde_273px,#7b9cde_290px,#8ca5de_320px,#94b5e7_337px,#bdc6ce_337px,#bdc6ce_437px,#d6d6de_437px,#eff7f7_457px)]" />
        <aside className="flex w-[229px] shrink-0 flex-col">
          <div className="mt-[2px] flex flex-1 flex-col border-t border-l border-[#adadb5] pt-1 pb-[5px] pl-[2px]">
            <DataPanel />
            <Panel icon={<FunnelIcon />} title="Filtre" className="mt-3 mr-[5px] ml-[2px] h-[115px]" />
            <QueryPanel />
          </div>
        </aside>
        <div className="mt-[58px] ml-[3px] w-[7px] shrink-0 bg-[linear-gradient(#d6d6de_3px,#bdc6ce_3px,#bdc6ce_18px,#94b5e7_18px,#8ca5de_28px,#638cde_34px,#4a84d6_54px,#4a84d6_100px,#4268c6_100px,#4268c6_143px,#4a84d6_143px,#4a84d6_200px,#638cde_200px,#638cde_243px,#7b9cde_260px,#8ca5de_295px,#94b5e7_307px,#bdc6ce_307px,#bdc6ce_371px,#d6d6de_371px,#eff7f7_390px)]" />
        <DocumentWindow />
      </div>
      <Footer />
    </div>
  );
}
